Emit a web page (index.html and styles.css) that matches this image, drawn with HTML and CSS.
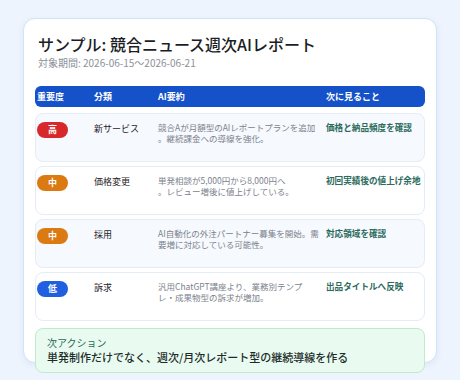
FILE: index.html
```html
<!DOCTYPE html>
<html lang="ja">
<head>
<meta charset="utf-8">
<link rel="stylesheet" href="styles.css">
</head>
<body>
<div class="card">
  <h1 class="title">サンプル: 競合ニュース週次AIレポート</h1>
  <div class="period">対象期間: 2026-06-15〜2026-06-21</div>
  <div class="thead">
    <div>重要度</div><div>分類</div><div>AI要約</div><div>次に見ること</div>
  </div>
  <div class="rows">
    <div class="row tint">
      <div><span class="badge high">高</span></div>
      <div class="cat">新サービス</div>
      <div class="sum"><div>競合Aが月額型のAIレポートプランを追加</div><div>。継続課金への導線を強化。</div></div>
      <div class="next">価格と納品頻度を確認</div>
    </div>
    <div class="row">
      <div><span class="badge mid">中</span></div>
      <div class="cat">価格変更</div>
      <div class="sum"><div>単発相談が5,000円から8,000円へ</div><div>。レビュー増後に値上げしている。</div></div>
      <div class="next">初回実績後の値上げ余地</div>
    </div>
    <div class="row tint">
      <div><span class="badge mid">中</span></div>
      <div class="cat">採用</div>
      <div class="sum"><div>AI自動化の外注パートナー募集を開始。需</div><div>要増に対応している可能性。</div></div>
      <div class="next">対応領域を確認</div>
    </div>
    <div class="row">
      <div><span class="badge low">低</span></div>
      <div class="cat">訴求</div>
      <div class="sum"><div>汎用ChatGPT講座より、業務別テンプ</div><div>レ・成果物型の訴求が増加。</div></div>
      <div class="next">出品タイトルへ反映</div>
    </div>
  </div>
  <div class="action">
    <div class="action-label">次アクション</div>
    <div class="action-text">単発制作だけでなく、週次/月次レポート型の継続導線を作る</div>
  </div>
</div>
</body>
</html>
```
FILE: styles.css
```css
* { box-sizing: border-box; }
html, body { margin: 0; padding: 0; }
body {
  background: #edf4fd;
  font-family: "Noto Sans CJK JP", "Noto Sans", sans-serif;
  width: 460px;
  height: 380px;
  overflow: hidden;
}
.card {
  margin: 18px 0 0 23px;
  width: 414px;
  height: 345px;
  background: #ffffff;
  border: 1px solid #d3e2f5;
  border-radius: 12px;
  box-shadow: 0 2px 6px rgba(30, 80, 160, 0.08);
  padding: 15px 11px 0 11px;
}
.title {
  margin: 0 0 0 3px;
  font-size: 16px;
  line-height: 21px;
  font-weight: 500;
  color: #1b1e24;
}
.period {
  margin: 1px 0 0 3px;
  font-size: 10px;
  line-height: 13px;
  color: #8b9099;
}
.thead {
  margin-top: 17px;
  height: 21px;
  background: #1551c9;
  border-radius: 6px;
  display: grid;
  grid-template-columns: 58px 64px 168px 1fr;
  padding: 0 0 0 2px;
  color: #ffffff;
  font-size: 9px;
  font-weight: 700;
  line-height: 21px;
}
.thead > div:not(:first-child) { margin-left: -1px; }
.rows {
  margin-top: 6px;
  display: flex;
  flex-direction: column;
  gap: 4px;
}
.row {
  height: 49px;
  border: 1px solid #e4ecf6;
  border-radius: 8px;
  background: #ffffff;
  display: grid;
  grid-template-columns: 58px 64px 168px 1fr;
  align-items: start;
  padding: 8px 0 0 1px;
}
.row.tint { background: #f6f9fe; }
.badge {
  display: block;
  width: 31px;
  height: 16px;
  border-radius: 8px;
  color: #ffffff;
  font-size: 9px;
  font-weight: 700;
  line-height: 16px;
  text-align: center;
}
.badge.high { background: #d7292b; }
.badge.mid { background: #db7a12; }
.badge.low { background: #1f5fe0; }
.cat {
  font-size: 9px;
  line-height: 14px;
  font-weight: 400;
  color: #1f2227;
  margin-left: -1px;
}
.sum {
  font-size: 8.5px;
  line-height: 10.5px;
  color: #7c828d;
  white-space: nowrap;
  margin-left: -1px;
}
.next {
  font-size: 8.6px;
  line-height: 10px;
  font-weight: 700;
  color: #2c6b5c;
  white-space: nowrap;
  margin-left: -1px;
}
.action {
  margin-top: 7px;
  border: 1px solid #bdebcb;
  background: #e9fbf0;
  border-radius: 8px;
  padding: 7px 11px 8px 11px;
}
.action-label {
  font-size: 10px;
  line-height: 14px;
  color: #2a6a5a;
  font-weight: 400;
}
.action-text {
  font-size: 11px;
  line-height: 14px;
  color: #1d2b2a;
  font-weight: 500;
}
```
